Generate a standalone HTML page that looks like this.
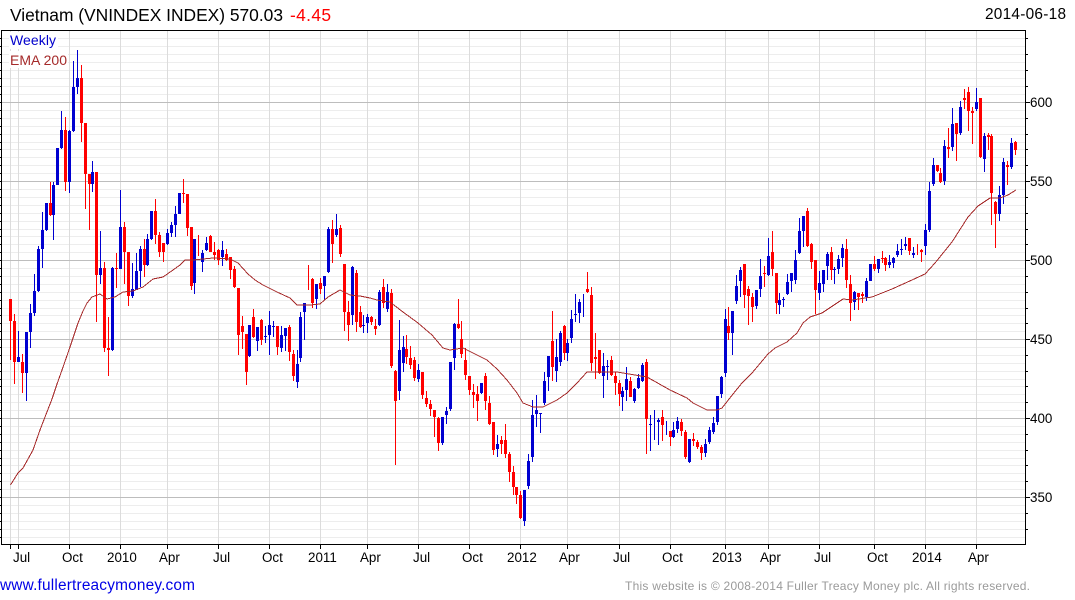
<!DOCTYPE html>
<html><head><meta charset="utf-8"><title>Vietnam (VNINDEX INDEX)</title>
<style>html,body{margin:0;padding:0;background:#fff;width:1075px;height:600px;overflow:hidden}svg{display:block}text{font-family:"Liberation Sans",Arial,sans-serif}</style></head>
<body>
<svg xmlns="http://www.w3.org/2000/svg" width="1075" height="600" viewBox="0 0 1075 600">
<rect width="1075" height="600" fill="#fff"/>
<g shape-rendering="crispEdges" fill="none">
<path stroke="#ededed" d="M2 38.5H1025M2 46.5H1025M2 54.5H1025M2 62.5H1025M2 70.5H1025M2 78.5H1025M2 86.5H1025M2 94.5H1025M2 110.5H1025M2 118.5H1025M2 126.5H1025M2 134.5H1025M2 142.5H1025M2 149.5H1025M2 157.5H1025M2 165.5H1025M2 173.5H1025M2 189.5H1025M2 197.5H1025M2 205.5H1025M2 213.5H1025M2 221.5H1025M2 229.5H1025M2 236.5H1025M2 244.5H1025M2 252.5H1025M2 268.5H1025M2 276.5H1025M2 284.5H1025M2 292.5H1025M2 300.5H1025M2 308.5H1025M2 315.5H1025M2 323.5H1025M2 331.5H1025M2 347.5H1025M2 355.5H1025M2 363.5H1025M2 371.5H1025M2 379.5H1025M2 386.5H1025M2 394.5H1025M2 402.5H1025M2 410.5H1025M2 426.5H1025M2 434.5H1025M2 442.5H1025M2 450.5H1025M2 458.5H1025M2 465.5H1025M2 473.5H1025M2 481.5H1025M2 489.5H1025M2 505.5H1025M2 513.5H1025M2 521.5H1025M2 529.5H1025M2 537.5H1025"/>
<path stroke="#dcdcdc" d="M10.5 31V544M18.5 31V544M69.5 31V544M120.5 31V544M167.5 31V544M218.5 31V544M269.5 31V544M320.5 31V544M367.5 31V544M418.5 31V544M469.5 31V544M520.5 31V544M567.5 31V544M619.5 31V544M670.5 31V544M725.5 31V544M768.5 31V544M819.5 31V544M874.5 31V544M925.5 31V544M976.5 31V544"/>
<path stroke="#bdbdbd" d="M2 102.5H1025M2 181.5H1025M2 260.5H1025M2 339.5H1025M2 418.5H1025M2 497.5H1025"/>
<rect x="9" y="32" width="49" height="17" fill="#fff"/>
<rect x="9" y="51" width="59" height="17" fill="#fff"/>
<!-- blue wicks -->
<path stroke="#0000d0" stroke-width="1" d="M18.5 331V362M26.5 332V401M30.5 304V348M34.5 274V316M38.5 246V292M42.5 212V268M46.5 203V231M53.5 182V240M57.5 148V185M61.5 111V149M69.5 130V193M73.5 61V132M77.5 50V94M92.5 161V192M100.5 231V284M112.5 267V351M120.5 190V269M132.5 263V298M136.5 253V290M140.5 246V287M147.5 234V266M151.5 211V240M167.5 229V245M171.5 222V237M175.5 206V237M179.5 193V214M194.5 239V294M202.5 250V272M206.5 237V251M222.5 241V266M249.5 325V357M257.5 327V351M265.5 326V343M269.5 311V355M273.5 321V337M281.5 326V352M285.5 328V351M297.5 350V388M300.5 312V362M304.5 303V340M316.5 284V309M324.5 276V300M328.5 227V273M336.5 214V237M352.5 266V325M363.5 315V333M367.5 314V333M379.5 290V326M387.5 284V312M399.5 320V400M403.5 336V372M418.5 364V382M442.5 417V445M446.5 407V424M450.5 362V411M454.5 323V370M481.5 383V394M497.5 435V457M524.5 490V526M528.5 454V489M532.5 400V462M536.5 395V427M540.5 413V433M544.5 372V405M548.5 356V391M556.5 339V382M560.5 331V366M567.5 339V361M571.5 310V343M575.5 294V322M579.5 299V323M583.5 294V317M603.5 353V398M607.5 360V380M622.5 387V411M626.5 367V401M634.5 388V403M638.5 374V389M642.5 363V382M650.5 415V451M654.5 410V440M658.5 418V445M666.5 421V435M673.5 422V438M677.5 417V433M689.5 439V463M705.5 439V457M709.5 427V444M713.5 417V434M717.5 396V425M721.5 376V398M725.5 309V377M732.5 311V355M736.5 275V304M740.5 267V297M756.5 290V309M760.5 259V297M768.5 238V276M779.5 293V314M783.5 297V307M787.5 274V295M791.5 273V292M795.5 250V284M799.5 218V254M803.5 216V247M819.5 271V300M823.5 270V292M827.5 252V280M834.5 267V284M838.5 255V274M842.5 244V267M854.5 291V310M866.5 278V301M870.5 264V281M878.5 259V273M889.5 255V268M893.5 257V268M897.5 244V257M901.5 239V255M905.5 237V250M913.5 247V258M925.5 224V255M929.5 182V232M933.5 158V186M944.5 140V185M952.5 108V151M960.5 101V135M976.5 88V111M984.5 133V172M999.5 186V221M1003.5 158V204M1011.5 138V169"/>
<!-- blue bodies -->
<path stroke="#0000d0" stroke-width="3" d="M18.5 357V362M26.5 332V373M30.5 313V332M34.5 291V313M38.5 249V291M42.5 230V249M46.5 203V230M53.5 185V215M57.5 148V185M61.5 130V148M69.5 131V182M73.5 87V131M77.5 78V87M92.5 172V184M100.5 268V275M112.5 268V350M120.5 227V269M132.5 289V296M136.5 271V290M140.5 249V271M147.5 239V265M151.5 211V239M167.5 233V244M171.5 225V233M175.5 214V225M179.5 193V214M194.5 239V283M202.5 253V262M206.5 243V250M222.5 250V257M249.5 325V356M257.5 327V341M265.5 336V337M269.5 325V335M273.5 326V327M281.5 335V348M285.5 328V336M297.5 364V382M300.5 317V358M304.5 303V312M316.5 284V299M324.5 276V286M328.5 229V272M336.5 229V235M352.5 267V315M363.5 325V326M367.5 317V323M379.5 292V325M387.5 292V309M399.5 350V391M403.5 347V363M418.5 370V379M442.5 417V443M446.5 411V415M450.5 362V409M454.5 324V358M481.5 383V393M497.5 444V449M524.5 490V521M528.5 461V486M532.5 415V457M536.5 410V414M540.5 413V414M544.5 381V403M548.5 356V377M556.5 357V371M560.5 333V362M567.5 343V353M571.5 319V338M575.5 314V315M579.5 302V313M603.5 366V376M607.5 366V367M622.5 391V397M626.5 379V390M634.5 389V401M638.5 378V388M642.5 365V381M650.5 424V425M658.5 420V422M673.5 430V437M677.5 421V429M689.5 439V462M705.5 444V453M709.5 430V442M713.5 423V432M717.5 396V422M721.5 377V394M725.5 319V373M732.5 311V333M736.5 286V301M740.5 270V281M756.5 290V306M760.5 276V289M768.5 256V275M779.5 300V305M783.5 299V300M787.5 282V294M791.5 273V281M795.5 260V280M799.5 231V253M803.5 216V231M819.5 283V293M823.5 270V284M827.5 254V266M834.5 269V270M838.5 259V269M842.5 248V258M854.5 292V302M866.5 281V297M870.5 264V281M878.5 259V269M889.5 262V265M893.5 258V263M897.5 251V255M901.5 249V250M905.5 244V246M913.5 253V255M925.5 230V246M929.5 191V230M933.5 165V184M944.5 146V181M952.5 124V147M960.5 107V133M976.5 102V109M984.5 136V159M999.5 195V214M1003.5 162V195M1011.5 143V167"/>
<!-- red wicks -->
<path stroke="#ff0000" stroke-width="1" d="M10.5 299V360M14.5 314V384M22.5 354V393M50.5 182V216M65.5 117V191M81.5 65V142M85.5 123V209M89.5 174V230M96.5 172V322M104.5 262V352M108.5 317V376M116.5 253V288M124.5 222V284M128.5 252V306M144.5 239V277M155.5 199V244M159.5 232V257M163.5 243V262M183.5 179V203M187.5 194V236M191.5 227V290M198.5 235V256M210.5 235V252M214.5 242V260M218.5 249V265M226.5 249V261M230.5 257V279M234.5 266V288M238.5 288V355M242.5 316V349M246.5 334V385M253.5 309V338M261.5 319V345M277.5 326V355M289.5 325V361M293.5 350V381M308.5 265V290M312.5 278V308M320.5 278V294M332.5 220V263M340.5 225V257M344.5 264V331M348.5 301V341M356.5 270V332M360.5 306V328M371.5 316V325M375.5 319V335M383.5 279V308M391.5 289V368M395.5 370V465M406.5 335V364M410.5 346V369M414.5 357V381M422.5 372V399M426.5 391V407M430.5 400V416M434.5 410V437M438.5 417V451M458.5 299V329M461.5 321V358M465.5 348V380M469.5 376V395M473.5 384V408M477.5 386V421M485.5 373V410M489.5 396V425M493.5 422V455M501.5 436V454M505.5 424V458M509.5 452V482M513.5 466V495M516.5 487V504M520.5 491V519M552.5 311V381M564.5 325V360M587.5 272V293M591.5 287V371M595.5 333V379M599.5 350V374M611.5 356V376M615.5 372V395M619.5 380V406M630.5 377V397M646.5 359V454M662.5 410V441M670.5 431V446M681.5 419V436M685.5 430V459M693.5 433V446M697.5 440V449M701.5 445V460M728.5 307V340M744.5 264V308M748.5 286V325M752.5 293V322M764.5 266V287M772.5 231V276M776.5 273V314M807.5 208V247M811.5 243V269M815.5 260V314M831.5 247V280M846.5 239V288M850.5 275V321M858.5 293V310M862.5 292V303M874.5 256V271M882.5 251V263M885.5 257V271M909.5 238V255M917.5 244V255M921.5 249V262M937.5 165V172M940.5 168V183M948.5 128V158M956.5 123V161M964.5 89V109M968.5 87V131M972.5 107V144M980.5 98V158M988.5 133V150M991.5 134V225M995.5 201V248M1007.5 161V185M1015.5 141V155"/>
<!-- red bodies -->
<path stroke="#ff0000" stroke-width="3" d="M10.5 299V321M14.5 321V362M22.5 362V373M50.5 203V215M65.5 130V182M81.5 78V123M85.5 123V174M89.5 174V184M96.5 172V275M104.5 268V348M108.5 348V350M116.5 268V269M124.5 227V252M128.5 252V296M144.5 249V265M155.5 211V235M159.5 235V252M163.5 243V252M183.5 193V194M187.5 194V228M191.5 227V286M210.5 236V252M214.5 252V255M218.5 250V260M226.5 254V260M230.5 257V270M234.5 269V287M238.5 288V335M242.5 326V332M246.5 334V372M253.5 317V337M261.5 320V340M277.5 326V347M289.5 327V352M293.5 354V376M312.5 279V303M320.5 283V289M332.5 229V244M340.5 228V254M344.5 264V312M348.5 312V325M356.5 273V322M360.5 312V327M371.5 317V322M375.5 326V329M383.5 287V303M391.5 293V366M395.5 371V401M406.5 349V357M410.5 358V365M414.5 360V378M422.5 372V395M426.5 398V404M430.5 404V409M434.5 410V417M438.5 418V443M458.5 324V328M461.5 339V354M465.5 360V375M469.5 376V390M473.5 392V395M477.5 394V401M485.5 376V401M489.5 403V424M493.5 422V450M501.5 440V444M505.5 440V454M509.5 454V472M513.5 472V487M516.5 487V495M520.5 495V518M552.5 341V367M564.5 326V353M587.5 289V292M591.5 295V363M595.5 357V359M599.5 350V373M611.5 360V375M615.5 376V383M619.5 383V394M630.5 381V397M646.5 362V419M662.5 417V425M670.5 431V437M681.5 422V431M685.5 432V457M693.5 439V441M697.5 442V447M701.5 447V453M728.5 326V333M744.5 264V295M748.5 289V296M752.5 297V307M764.5 273V274M772.5 252V269M776.5 273V303M807.5 211V246M811.5 244V262M815.5 260V290M831.5 252V270M846.5 249V280M850.5 284V303M858.5 293V297M862.5 294V296M874.5 264V269M882.5 258V259M885.5 258V265M909.5 238V251M921.5 250V252M937.5 165V171M940.5 173V182M948.5 147V149M956.5 123V134M964.5 98V100M968.5 92V111M972.5 111V113M980.5 98V157M988.5 135V137M991.5 136V193M995.5 202V214M1007.5 165V167M1015.5 142V150"/>
</g>
<!-- EMA -->
<polyline fill="none" stroke="#a52a2a" stroke-width="1" shape-rendering="crispEdges" points="10.5,485 18,473 23,468 33,450 40,430 45,417 52,399 57,384 62,370 70,347 78,323 83,311 87,303 92,297 100,294 107,299 115,297 123,292 133,291 143,287 153,279 163,277 173,270 180,265 185,260 193,260 213,258 230,259 238,263 248,274 255,280 263,285 277,292 290,298 297,305 310,305 320,304 328,297 340,290 350,295 360,296 370,298 377,300 390,302 403,312 418,323 432,335 443,348 450,350 463,348 475,354 487,360 497,369 507,380 517,393 523,403 533,407 543,407 557,400 567,393 577,383 587,372 617,372 647,377 670,390 687,398 693,403 707,410 717,410 722,408 733,394 742,383 752,373 768,354 775,348 787,342 797,333 803,323 810,317 822,313 843,299 852,300 872,297 892,289 912,280 925,274 935,263 952,242 968,217 978,206 990,198 1000,198 1008,195 1016,190"/>
<g shape-rendering="crispEdges" fill="none" stroke="#000">
<path d="M1.5 30V545M1 30.5H1026M1 544.5H1026M1025.5 30V545"/>
<path d="M0 38.5H2M0 46.5H2M0 54.5H2M0 62.5H2M0 70.5H2M0 78.5H2M0 86.5H2M0 94.5H2M0 102.5H2M0 110.5H2M0 118.5H2M0 126.5H2M0 134.5H2M0 142.5H2M0 149.5H2M0 157.5H2M0 165.5H2M0 173.5H2M0 181.5H2M0 189.5H2M0 197.5H2M0 205.5H2M0 213.5H2M0 221.5H2M0 229.5H2M0 236.5H2M0 244.5H2M0 252.5H2M0 260.5H2M0 268.5H2M0 276.5H2M0 284.5H2M0 292.5H2M0 300.5H2M0 308.5H2M0 315.5H2M0 323.5H2M0 331.5H2M0 339.5H2M0 347.5H2M0 355.5H2M0 363.5H2M0 371.5H2M0 379.5H2M0 386.5H2M0 394.5H2M0 402.5H2M0 410.5H2M0 418.5H2M0 426.5H2M0 434.5H2M0 442.5H2M0 450.5H2M0 458.5H2M0 465.5H2M0 473.5H2M0 481.5H2M0 489.5H2M0 497.5H2M0 505.5H2M0 513.5H2M0 521.5H2M0 529.5H2M0 537.5H2"/>
<path d="M1025 38.5H1028M1025 54.5H1028M1025 70.5H1028M1025 86.5H1028M1025 102.5H1030M1025 118.5H1028M1025 134.5H1028M1025 149.5H1028M1025 165.5H1028M1025 181.5H1030M1025 197.5H1028M1025 213.5H1028M1025 229.5H1028M1025 244.5H1028M1025 260.5H1030M1025 276.5H1028M1025 292.5H1028M1025 308.5H1028M1025 323.5H1028M1025 339.5H1030M1025 355.5H1028M1025 371.5H1028M1025 386.5H1028M1025 402.5H1028M1025 418.5H1030M1025 434.5H1028M1025 450.5H1028M1025 465.5H1028M1025 481.5H1028M1025 497.5H1030M1025 513.5H1028M1025 529.5H1028"/>
<path d="M10.5 545V549M18.5 545V549M69.5 545V549M120.5 545V549M167.5 545V549M218.5 545V549M269.5 545V549M320.5 545V549M367.5 545V549M418.5 545V549M469.5 545V549M520.5 545V549M567.5 545V549M619.5 545V549M670.5 545V549M725.5 545V549M768.5 545V549M819.5 545V549M874.5 545V549M925.5 545V549M976.5 545V549"/>
</g>
<text x="10" y="21" font-size="17.4" fill="#000" textLength="273" lengthAdjust="spacing">Vietnam (VNINDEX INDEX) 570.03</text>
<text x="290" y="21" font-size="17.4" fill="#ff0000" textLength="41" lengthAdjust="spacing">-4.45</text>
<text x="985" y="19" font-size="15.4" fill="#000" textLength="81" lengthAdjust="spacing">2014-06-18</text>
<text x="10" y="45" font-size="14" fill="#0000cc" textLength="46" lengthAdjust="spacing">Weekly</text>
<text x="10" y="65" font-size="14" fill="#a52a2a" textLength="57" lengthAdjust="spacing">EMA 200</text>
<g font-size="13.4" fill="#000">
<text x="1030" y="107">600</text><text x="1030" y="186">550</text><text x="1030" y="265">500</text><text x="1030" y="344">450</text><text x="1030" y="423">400</text><text x="1030" y="502">350</text>
<text x="13" y="562">Jul</text><text x="62" y="562">Oct</text><text x="107" y="562">2010</text><text x="159" y="562">Apr</text><text x="213" y="562">Jul</text><text x="262" y="562">Oct</text><text x="308" y="562">2011</text><text x="360" y="562">Apr</text><text x="413" y="562">Jul</text><text x="462" y="562">Oct</text><text x="507" y="562">2012</text><text x="559" y="562">Apr</text><text x="613" y="562">Jul</text><text x="662" y="562">Oct</text><text x="712" y="562">2013</text><text x="760" y="562">Apr</text><text x="814" y="562">Jul</text><text x="867" y="562">Oct</text><text x="912" y="562">2014</text><text x="968" y="562">Apr</text>
</g>
<text x="0" y="590" font-size="15.4" fill="#0000e6" textLength="195" lengthAdjust="spacing">www.fullertreacymoney.com</text>
<text x="625" y="590" font-size="12" fill="#9a9a9a" textLength="405" lengthAdjust="spacing">This website is © 2008-2014 Fuller Treacy Money plc. All rights reserved.</text>
</svg>
</body></html>
